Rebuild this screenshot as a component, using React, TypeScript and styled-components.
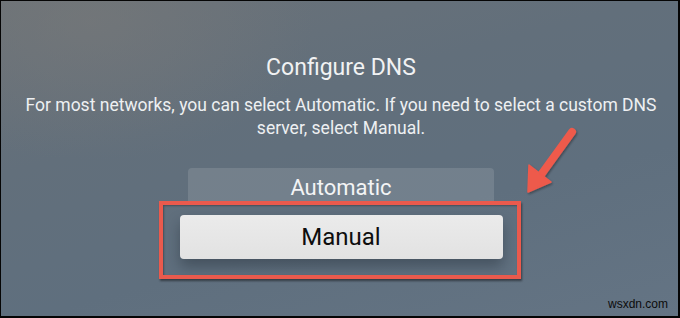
import React from "react";
import styled, { createGlobalStyle } from "styled-components";

const Global = createGlobalStyle`
  html, body { margin: 0; padding: 0; background: #000; }
  body { font-family: Roboto, "Liberation Sans", sans-serif; }
`;

const Screen = styled.div`
  position: relative;
  box-sizing: border-box;
  width: 680px;
  height: 318px;
  overflow: hidden;
  border-style: solid;
  border-color: #050505;
  border-width: 1px 2px 2px 1px;
  background:
    radial-gradient(ellipse 320px 200px at 90px 20px, rgba(122, 122, 121, 0.5), rgba(122, 122, 121, 0) 70%),
    linear-gradient(165deg, #6b7278 0%, #626f7b 35%, #5f6f7e 65%, #647484 100%);
  display: flex;
  flex-direction: column;
  align-items: center;
  padding: 53px 0 0 3px;
  font-family: Roboto, "Liberation Sans", sans-serif;
`;

const Title = styled.h1`
  margin: 0;
  font-size: 23px;
  line-height: 28px;
  font-weight: 400;
  color: #f1f2f3;
`;

const Description = styled.p`
  margin: 12px 0 0;
  width: 650px;
  text-align: center;
  font-size: 17.5px;
  line-height: 23px;
  color: #eef0f2;
`;

const Options = styled.div`
  margin-top: 28px;
  display: flex;
  flex-direction: column;
  align-items: center;
`;

const Option = styled.div<{ $focused?: boolean }>`
  position: relative;
  box-sizing: border-box;
  text-align: center;
  ${(p) =>
    p.$focused
      ? `
    width: 323px;
    height: 44px;
    margin-top: 10px;
    border-radius: 4px;
    background: linear-gradient(180deg, #ebebeb 0%, #e2e2e2 100%);
    box-shadow: 0 8px 14px rgba(20, 28, 38, 0.35);
    color: #0e0e0e;
    font-size: 24px;
    line-height: 44px;
  `
      : `
    width: 306px;
    height: 37px;
    padding-top: 6px;
    border-radius: 4px 4px 0 0;
    background: rgba(255, 255, 255, 0.12);
    color: #f3f4f5;
    font-size: 22px;
    line-height: 28px;
  `}
`;

const Highlight = styled.div`
  position: absolute;
  left: -21px;
  right: -18px;
  top: -14px;
  bottom: -20px;
  border: 4px solid #ea5a4d;
  box-shadow: 1px 2px 2px rgba(0, 0, 0, 0.45), inset 1px 1px 2px rgba(0, 0, 0, 0.3);
  pointer-events: none;
`;

const ArrowLayer = styled.svg`
  position: absolute;
  left: 515px;
  top: 120px;
  overflow: visible;
`;

const Watermark = styled.div`
  position: absolute;
  right: 10px;
  bottom: 5px;
  font-family: "Liberation Sans", Arial, sans-serif;
  font-size: 12px;
  color: #0c0c0c;
`;

export default function App() {
  return (
    <>
      <Global />
      <Screen>
        <Title>Configure DNS</Title>
        <Description>
          For most networks, you can select Automatic. If you need to select a custom DNS
          server, select Manual.
        </Description>
        <Options>
          <Option>Automatic</Option>
          <Option $focused>
            Manual
            <Highlight />
          </Option>
        </Options>
        <ArrowLayer width="70" height="80" viewBox="0 0 70 80">
          <defs>
            <filter id="sh" x="-30%" y="-30%" width="160%" height="160%">
              <feDropShadow dx="1" dy="1.5" stdDeviation="1" floodColor="#000" floodOpacity="0.35" />
            </filter>
          </defs>
          <g filter="url(#sh)" fill="#ee5a4c" stroke="#ee5a4c">
            <line x1="56" y1="11" x2="22" y2="58" strokeWidth="8" strokeLinecap="round" />
            <polygon points="12,71 13,44 35,61" strokeWidth="1.5" strokeLinejoin="round" />
          </g>
        </ArrowLayer>
        <Watermark>wsxdn.com</Watermark>
      </Screen>
    </>
  );
}
